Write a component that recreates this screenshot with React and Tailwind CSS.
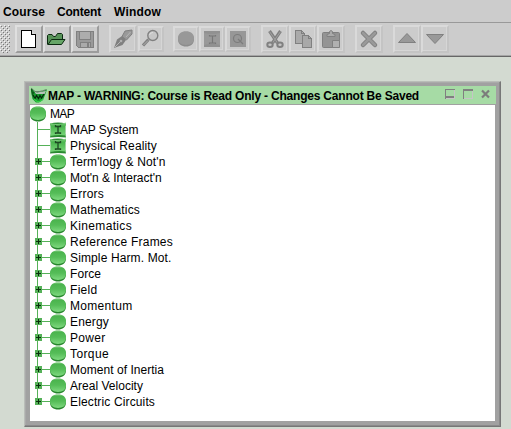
import { useLayoutEffect, useRef, useState } from "react";

// Text whose letter spacing is adjusted so that it spans the given width.
function Fit({ text, width, className = "" }) {
  const ref = useRef(null);
  const [spacing, setSpacing] = useState(0);
  useLayoutEffect(() => {
    const natural = ref.current.getBoundingClientRect().width;
    setSpacing((s) => s + (width - natural) / text.length);
  }, [text, width]);
  return (
    <span ref={ref} className={"inline-block whitespace-pre " + className} style={{ letterSpacing: spacing + "px" }}>
      {text}
    </span>
  );
}

const rows = [
  ["MAP System", 68.500, "page"],
  ["Physical Reality", 87, "page"],
  ["Term'logy & Not'n", 95.500],
  ["Mot'n & Interact'n", 91.500],
  ["Errors", 34],
  ["Mathematics", 70],
  ["Kinematics", 62],
  ["Reference Frames", 103],
  ["Simple Harm. Mot.", 101.500],
  ["Force", 31],
  ["Field", 27.500],
  ["Momentum", 62.500],
  ["Energy", 39],
  ["Power", 35.500],
  ["Torque", 39],
  ["Moment of Inertia", 94],
  ["Areal Velocity", 73],
  ["Electric Circuits", 85],
];

// Gradients shared by every tree icon.
function TreeGradients() {
  return (
    <svg width="0" height="0" className="absolute">
      <defs>
        <linearGradient id="ballFace" x1="0" y1="0" x2="0" y2="1">
          <stop offset="0" stopColor="#8fd28f" />
          <stop offset="0.14" stopColor="#4bb44e" />
          <stop offset="0.5" stopColor="#55bd58" />
          <stop offset="1" stopColor="#7fd980" />
        </linearGradient>
        <linearGradient id="pageFace" x1="0" y1="0" x2="0" y2="1">
          <stop offset="0" stopColor="#74c975" />
          <stop offset="0.25" stopColor="#4ab54e" />
          <stop offset="1" stopColor="#78d579" />
        </linearGradient>
      </defs>
    </svg>
  );
}

function Ball() {
  return (
    <svg width="16" height="16" viewBox="0 0 16 16" className="block shrink-0">
      <path d="M0 8.500C0 4 3.500 1.500 8 1.500S16 4 16 8.500S12.500 15.600 8 15.600S0 13 0 8.500Z" fill="#26852c" />
      <path d="M0 7.300C0 2.500 3.500 0.300 8 0.300S16 2.500 16 7.300S12.500 14 8 14S0 12 0 7.300Z" fill="url(#ballFace)" />
    </svg>
  );
}

function PageIcon() {
  return (
    <svg width="16" height="16" viewBox="0 0 16 16" className="block shrink-0">
      <path d="M0 1.500Q8 -0.500 16 1.500L15.300 4V12L16 15.500Q8 14.500 0 15.500L0.700 12V4Z" fill="#2a8a31" />
      <path d="M0 1.500L4 2.500Q10 3 16 1V3L15.300 4V12L16 13.500Q8 12.500 0 14L0.700 12V4Z" fill="url(#pageFace)" />
      <path d="M0 1Q3 2.200 8 2T16 0.500V1.500Q8 3.500 0 2Z" fill="#8cd48c" />
      <path d="M5.500 3V4.500H10.500V3M8 4.500V11M5.500 12V11H10.500V12" fill="none" stroke="#1c4a22" strokeWidth="1.300" />
    </svg>
  );
}

function Plus() {
  return (
    <svg width="7" height="7" className="block" shapeRendering="crispEdges">
      <rect width="7" height="7" fill="#55b158" />
      <rect x="1" y="3" width="5" height="1" fill="#092d0c" />
      <rect x="3" y="1" width="1" height="5" fill="#092d0c" />
    </svg>
  );
}

function Branch({ last, leaf }) {
  return (
    <div className="relative h-4 w-5 shrink-0">
      <div className={"absolute left-[7px] top-0 w-px bg-[#55b158] " + (last ? "h-2" : "h-4")} />
      <div className="absolute left-[7px] top-[7px] h-px w-[13px] bg-[#55b158]" />
      {!leaf && (
        <div className="absolute left-[5px] top-1">
          <Plus />
        </div>
      )}
    </div>
  );
}

function Button({ children, small, solid }) {
  return (
    <div
      className={
        "flex shrink-0 items-center justify-center border-2 " +
        (small ? "mt-px h-[26px] w-[26px] " : "h-7 w-7 ") +
        (solid
          ? "border-t-[#dfdfdf] border-l-[#dfdfdf] border-r-[#9c9c9c] border-b-[#9c9c9c]"
          : "border-t-[#dadada] border-l-[#dadada] border-r-[#c4c4c4] border-b-[#c4c4c4] shadow-[inset_-1px_-1px_0_#d6d6d6]")
      }
    >
      {children}
    </div>
  );
}

function Icon({ children, crisp }) {
  return (
    <svg width="20" height="20" viewBox="0 0 20 20" className="block shrink-0" shapeRendering={crisp ? "crispEdges" : "auto"}>
      {children}
    </svg>
  );
}

const G = "#999999";
const D = "#808080";

export default function App() {
  return (
    <div className="flex h-[429px] w-[511px] flex-col overflow-hidden bg-[#d3dad1] font-['Liberation_Sans',Arial,sans-serif] text-[12px] text-black">
      <TreeGradients />
      <div className="flex h-[22px] shrink-0 bg-[#cccccc] pl-[3px] font-bold leading-[24px]">
        <Fit text="Course" width={42} />
        <Fit text="Content" width={44} className="ml-3" />
        <Fit text="Window" width={47} className="ml-[13px]" />
      </div>
      <div className="flex h-[35px] shrink-0 border-t border-b border-t-[#999999] border-b-[#666666] bg-[#cccccc] pt-0.5 shadow-[inset_0_-1px_0_#a5a5a5]">
        <svg width="10" height="28" className="mr-[5px] block shrink-0" shapeRendering="crispEdges">
          <defs>
            <pattern id="grip" width="4" height="4" patternUnits="userSpaceOnUse">
              <path d="M0 0h1v1H0zM2 2h1v1H2z" fill="#f5f5f5" />
              <path d="M1 1h1v1H1zM3 3h1v1H3z" fill="#777777" />
            </pattern>
          </defs>
          <rect width="10" height="28" fill="url(#grip)" />
        </svg>
        <Button solid>
          <Icon crisp>
            <path d="M2.500 1.500H12.500L16.500 5.500V18.500H2.500Z" fill="#fff" stroke="#000" />
            <path d="M12.500 1.500V5.500H16.500" fill="#d8d8d8" stroke="#000" />
          </Icon>
        </Button>
        <Button solid>
          <Icon>
            <path d="M0.500 15.500V6.500L1.500 5.500H5L6.500 7.500H8.500L10.500 4.500H14.500L15.500 5.500V10.500" fill="#589359" stroke="#0c2a11" />
            <path d="M1 15.500L4.500 10.500H18L14.500 15.500Z" fill="#66a567" stroke="#0c2a11" />
          </Icon>
        </Button>
        <Button solid>
          <Icon crisp>
            <path d="M1.500 2.500H18.500V18.500H3.500L1.500 16.500Z" fill={G} stroke={D} />
            <rect x="4.500" y="2.500" width="11" height="8" fill="#adadad" stroke={D} />
            <rect x="5.500" y="13.500" width="10" height="5" fill="#aaa" stroke={D} />
            <rect x="12" y="14" width="2" height="4" fill={D} />
          </Icon>
        </Button>
        <div className="w-2.5 shrink-0" />
        <Button>
          <Icon>
            <path d="M12 2L19 1V5L13.500 11L9 7.500Z" fill={G} stroke={D} strokeWidth="1" />
            <path d="M9 7L13 11L9.500 16L1 19L4 10.500Z" fill={D} />
            <path d="M2 18L7.500 12.500M13 8L17.500 3" stroke="#b5b5b5" strokeWidth="1" />
            <circle cx="8" cy="12" r="1.300" fill="#b0b0b0" />
          </Icon>
        </Button>
        <div className="w-px shrink-0" />
        <Button small>
          <Icon>
            <path d="M7.500 10.500L2 16.500" stroke={D} strokeWidth="3.200" />
            <path d="M7 11.500L2.500 16" stroke="#b0b0b0" strokeWidth="1" />
            <circle cx="11.800" cy="6.500" r="5" fill="#c6c6c6" stroke={D} strokeWidth="1.400" />
            <path d="M8.500 6Q9 3.500 12 3.500" fill="none" stroke="#ddd" />
          </Icon>
        </Button>
        <div className="w-[9px] shrink-0" />
        <Button small>
          <svg width="16" height="16" viewBox="0 0 16 16">
            <path d="M0 8.500C0 4 3.500 1.500 8 1.500S16 4 16 8.500S12.500 15.600 8 15.600S0 13 0 8.500Z" fill="#8c8c8c" />
            <path d="M0 7.300C0 2.500 3.500 0.300 8 0.300S16 2.500 16 7.300S12.500 14 8 14S0 12 0 7.300Z" fill="#989898" />
          </svg>
        </Button>
        <Button small>
          <svg width="16" height="16" viewBox="0 0 16 16">
            <rect width="16" height="16" fill="#999" />
            <path d="M0 0H16V2Q8 4 0 2ZM0 16V14Q8 12 16 14V16Z" fill="#919191" />
            <path d="M5.500 4V5H11.500V4M8.500 5V12M5.500 13V12H11.500V13" fill="none" stroke="#777" strokeWidth="1.200" />
          </svg>
        </Button>
        <Button small>
          <svg width="16" height="16" viewBox="0 0 16 16">
            <rect width="16" height="16" fill="#979797" />
            <circle cx="7.500" cy="7.500" r="4" fill="none" stroke="#7c7c7c" strokeWidth="1.200" />
            <path d="M8 8L13 13" stroke="#7c7c7c" strokeWidth="1.200" />
          </svg>
        </Button>
        <div className="w-2.5 shrink-0" />
        <Button>
          <Icon>
            <path d="M4.500 2L12.500 14M15.500 2L7.500 14" stroke={D} strokeWidth="3.200" />
            <path d="M4.500 2.500L12.500 14M15.500 2.500L7.500 14" stroke="#a0a0a0" strokeWidth="1" />
            <ellipse cx="5" cy="15.800" rx="2.700" ry="2.200" fill="#c4c4c4" stroke={D} strokeWidth="2" />
            <ellipse cx="15" cy="15.800" rx="2.700" ry="2.200" fill="#c4c4c4" stroke={D} strokeWidth="2" />
          </Icon>
        </Button>
        <Button>
          <Icon crisp>
            <path d="M2.500 1.500H8.500L11.500 4.500V14.500H2.500Z" fill="#aaa" stroke={D} />
            <path d="M9.500 6.500H15.500L18.500 9.500V18.500H9.500Z" fill="#a8a8a8" stroke={D} />
            <path d="M8.500 1.500V4.500H11.500M15.500 6.500V9.500H18.500" fill="none" stroke={D} />
          </Icon>
        </Button>
        <Button>
          <Icon>
            <rect x="1.500" y="3.500" width="17" height="15" rx="1" fill="#949494" stroke={D} />
            <path d="M6 7.500V5.500L8.500 4.500V2.500L10 1.500L11.500 2.500V4.500L14 5.500V7.500Z" fill="#aaa" stroke={D} />
            <path d="M11.500 11.500H18.500V18.500H11.500Z" fill="#b0b0b0" stroke={D} />
          </Icon>
        </Button>
        <div className="w-2.5 shrink-0" />
        <Button>
          <Icon>
            <path d="M4 4L16 16M16 4L4 16" stroke={D} strokeWidth="4.500" strokeLinecap="round" />
            <path d="M4 4L16 16M16 4L4 16" stroke={G} strokeWidth="2.500" strokeLinecap="round" />
          </Icon>
        </Button>
        <div className="w-2.5 shrink-0" />
        <Button>
          <Icon>
            <path d="M1.500 13.500L10 4.500L18.500 13.500Z" fill={G} stroke={D} />
          </Icon>
        </Button>
        <Button>
          <Icon>
            <path d="M1.500 5.500L10 14.500L18.500 5.500Z" fill={G} stroke={D} />
          </Icon>
        </Button>
      </div>

      <div className="ml-6 mt-6 flex h-[346px] w-[477px] shrink-0 flex-col border border-t-[#b9bdb8] border-l-[#b9bdb8] border-r-[#777777] border-b-[#777777] bg-[#a1a1a1] pl-1 pt-1 shadow-[inset_-1px_-1px_0_#8a8a8a,inset_1px_1px_0_#aaaaaa]">
        <div className="flex h-[18px] w-[467px] shrink-0 bg-[#a6dba5] pl-px">
          <svg width="18" height="18" viewBox="0 0 18 18" className="block shrink-0">
            <path d="M1 2L5 5.500H11L17 3.500L15 9L13 14L9 16.500H6L2.500 13L1.500 8Z" fill="#1a9a2f" />
            <path d="M4 5L7 6.500L16 5L14.500 8H6Z" fill="#b9c4b9" />
            <path d="M1 2L5 5.500Q8 6.500 16.500 3.500" fill="none" stroke="#6c776c" strokeWidth="0.900" />
            <path d="M1.500 3L2.500 8L4 6" fill="none" stroke="#0d5c1a" strokeWidth="1.400" />
            <path d="M3 9L5 12.500L6.500 9.500L8.500 12.500L10 9.500L11.500 12L14 8" fill="none" stroke="#06280b" strokeWidth="1.200" />
            <path d="M4 13L7 15.500H10L13 13" fill="none" stroke="#2fcf45" strokeWidth="1.200" />
          </svg>
          <Fit text="MAP - WARNING: Course is Read Only - Changes Cannot Be Saved" width={371} className="font-bold leading-[20px]" />
          <svg width="48" height="18" className="ml-[26px] block shrink-0" shapeRendering="crispEdges">
            <rect x="0" y="3" width="10" height="1" fill="#808080" />
            <rect x="0" y="3" width="1" height="10" fill="#808080" />
            <rect x="1" y="12" width="9" height="1" fill="#c5c5c5" />
            <rect x="9" y="4" width="1" height="9" fill="#c5c5c5" />
            <rect x="1" y="10" width="8" height="2" fill="#808080" />
            <rect x="18" y="3" width="10" height="2" fill="#808080" />
            <rect x="18" y="3" width="1" height="10" fill="#808080" />
            <rect x="19" y="12" width="9" height="1" fill="#c5c5c5" />
            <rect x="27" y="5" width="1" height="8" fill="#c5c5c5" />
            <path d="M37 4.500L44 11.500M44 4.500L37 11.500" stroke="#7c7c7c" strokeWidth="2.200" shapeRendering="auto" />
          </svg>
        </div>
        <div className="ml-px mt-px h-[316px] w-[465px] shrink-0 bg-white pt-px">
          <div className="flex h-4 items-center">
            <Ball />
            <Fit text="MAP" width={24} className="ml-1 leading-4" />
          </div>
          {rows.map(([name, width, kind], i) => (
            <div key={name} className="flex h-4 items-center">
              <Branch leaf={kind === "page"} last={i === rows.length - 1} />
              {kind === "page" ? <PageIcon /> : <Ball />}
              <Fit text={name} width={width} className="ml-1 leading-4" />
            </div>
          ))}
        </div>
      </div>
    </div>
  );
}
